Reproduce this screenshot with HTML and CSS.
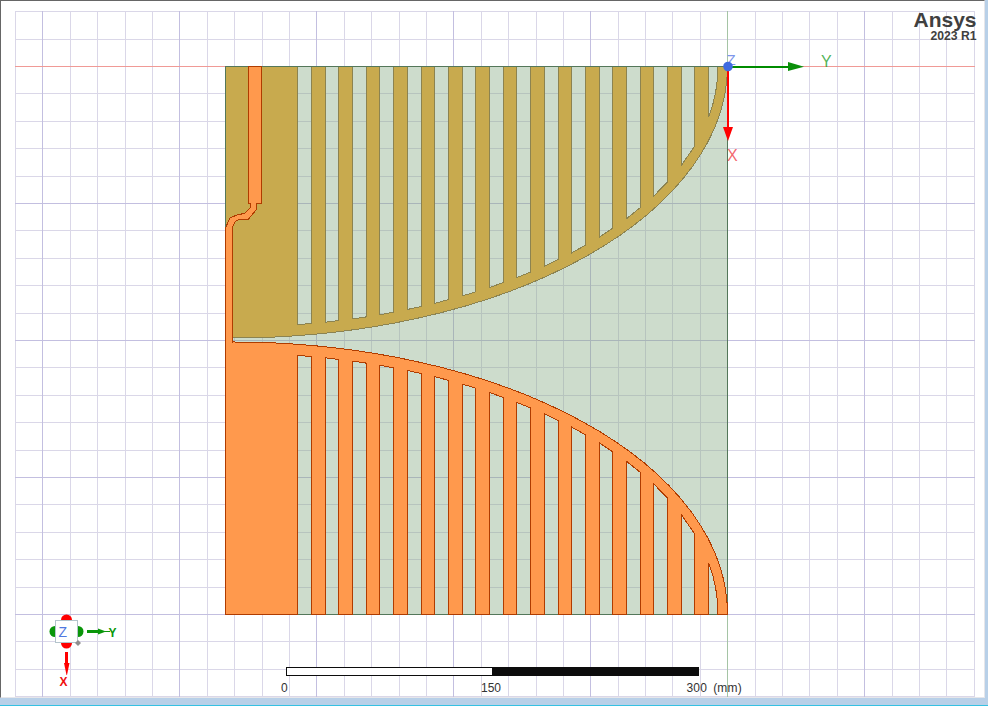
FILE: index.html
```html
<!DOCTYPE html>
<html lang="en">
<head>
<meta charset="utf-8">
<title>Ansys 2023 R1 – Modeler view</title>
<link rel="stylesheet" href="styles.css">
</head>
<body>
<div class="window">
  <main class="viewport">
    <svg class="scene" width="983" height="696" viewBox="1 1 983 696" xmlns="http://www.w3.org/2000/svg">
      <!-- grid -->
      <path class="grid-minor" d="M15.5 11V697M70.5 11V697M97.5 11V697M125.5 11V697M152.5 11V697M207.5 11V697M234.5 11V697M262.5 11V697M289.5 11V697M344.5 11V697M371.5 11V697M399.5 11V697M426.5 11V697M481.5 11V697M508.5 11V697M536.5 11V697M563.5 11V697M618.5 11V697M645.5 11V697M672.5 11V697M700.5 11V697M755.5 11V697M782.5 11V697M809.5 11V697M837.5 11V697M892.5 11V697M919.5 11V697M946.5 11V697M974.5 11V697M15 11.5H975M15 39.5H975M15 93.5H975M15 121.5H975M15 148.5H975M15 176.5H975M15 230.5H975M15 258.5H975M15 285.5H975M15 313.5H975M15 367.5H975M15 395.5H975M15 422.5H975M15 450.5H975M15 504.5H975M15 532.5H975M15 559.5H975M15 587.5H975M15 641.5H975M15 669.5H975M15 696.5H975"/>
      <path class="grid-major" d="M42.5 11V697M179.5 11V697M316.5 11V697M453.5 11V697M590.5 11V697M864.5 11V697M15 203.5H975M15 340.5H975M15 477.5H975M15 614.5H975"/>
      <path class="axis-line-red" d="M15 66.5H975"/>
      <path class="axis-line-green" d="M727.5 11V697"/>

      <!-- air box -->
      <rect class="airbox" x="225.5" y="66.5" width="502" height="548"/>

      <!-- upper conductor -->
      <path class="gold" d="M225.5 66.5H297.7V324.6L311.4 323.5V66.5H325.1V322.2L338.8 320.6V66.5H352.5V318.9L366.2 316.9V66.5H379.9V314.7L393.6 312.2V66.5H407.3V309.5L421 306.5V66.5H434.7V303.3L448.4 299.7V66.5H462.1V296L475.8 291.8V66.5H489.5V287.5L503.2 282.6V66.5H516.9V277.6L530.6 272V66.5H544.3V266.2L558 259.6V66.5H571.7V252.9L585.4 245.2V66.5H599.1V237.3L612.8 228.2V66.5H626.5V218.7L640.2 207.7V66.5H653.9V195.9L667.6 181.9V66.5H681.3V165.5L694.6 146.2V66.5H708.7V117.3A486 261 0 0 0 718 66.5H727.5A495 272 0 0 1 232 338H225.5Z"/>
      <rect class="airbox-edge" x="225.5" y="66.5" width="502" height="548"/>

      <!-- lower conductor and feed -->
      <path class="orange" d="M248.5 66.5H261.5V203.5H256.7L256 210L248.3 219.3L240 219L235 221.7L232.5 226.7V342H232A495 272 0 0 1 727.5 614.5H718A486 261 0 0 0 708.7 562.7V614.5H694.6V533.8L681.3 514.5V614.5H667.6V498.1L653.9 484.1V614.5H640.2V472.3L626.5 461.3V614.5H612.8V451.8L599.1 442.7V614.5H585.4V434.8L571.7 427.1V614.5H558V420.4L544.3 413.8V614.5H530.6V408L516.9 402.4V614.5H503.2V397.4L489.5 392.5V614.5H475.8V388.2L462.1 384V614.5H448.4V380.3L434.7 376.7V614.5H421V373.5L407.3 370.5V614.5H393.6V367.8L379.9 365.3V614.5H366.2V363.1L352.5 361.1V614.5H338.8V359.4L325.1 357.8V614.5H311.4V356.5L297.7 355.4V614.5H225.5V240L226 226.7L230 218L236.7 215L245 213.3L250 208L250.7 203.5H248.5Z"/>

      <!-- main axes -->
      <text class="label label-z" x="726.5" y="65">Z</text>
      <text class="label label-y" x="821" y="67">Y</text>
      <text class="label label-x" x="727" y="161">X</text>
      <rect class="fill-green" x="728" y="66" width="61" height="2"/>
      <path class="fill-green-head" d="M788 62L804 66.7L788 71Z"/>
      <rect class="fill-red" x="727" y="67" width="2" height="61"/>
      <path class="fill-red" d="M723 127H733L728 141Z"/>
      <circle class="origin" cx="728" cy="66.5" r="4.8"/>

      <!-- logo -->
      <text class="logo" x="976.5" y="27">Ansys</text>
      <text class="logo-sub" x="976.5" y="40">2023 R1</text>

      <!-- orientation triad -->
      <ellipse class="fill-red" cx="66.5" cy="620" rx="5.5" ry="5.5"/>
      <ellipse class="fill-red" cx="66.5" cy="643" rx="5.5" ry="5.5"/>
      <ellipse class="fill-tri-green" cx="55" cy="631.5" rx="5.5" ry="5.5"/>
      <ellipse class="fill-tri-green" cx="78" cy="631.5" rx="5.5" ry="5.5"/>
      <rect class="cube" x="55.5" y="620.5" width="22" height="22"/>
      <path class="diamond" d="M78 640L81 643L78 646L75 643Z"/>
      <text class="cube-z" x="62.7" y="637">Z</text>
      <rect class="fill-tri-green" x="87" y="630" width="12" height="3"/>
      <path class="fill-tri-green" d="M98 628.5L106 631.5L98 634.5Z"/>
      <rect class="fill-tri-green" x="105" y="631" width="5" height="1"/>
      <text class="tri tri-y" x="108.5" y="637">Y</text>
      <rect class="fill-red" x="65" y="652" width="3" height="12"/>
      <path class="fill-red" d="M64 663H69.5L67 675H66.5Z"/>
      <text class="tri tri-x" x="59.5" y="686">X</text>

      <!-- scale bar -->
      <rect class="scale-white" x="286.5" y="667.5" width="206" height="8"/>
      <rect class="scale-black" x="492" y="667" width="207" height="9"/>
      <text class="scale-text" x="281" y="692">0</text>
      <text class="scale-text" x="481" y="692">150</text>
      <text class="scale-text scale-unit" x="686.5" y="692">300 (mm)</text>
    </svg>
  </main>
  <div class="status-line"></div>
</div>
</body>
</html>
```
FILE: styles.css
```css
html, body {
  margin: 0;
  padding: 0;
  background: #b8d0e8;
}

.window {
  width: 988px;
  height: 706px;
  display: flex;
  flex-direction: column;
  overflow: hidden;
  background: #b8d0e8;
}

.viewport {
  width: 983px;
  height: 696px;
  border-top: 1px solid #666;
  border-left: 1px solid #666;
  border-right: 1px solid #e6e6ea;
  border-bottom: 1px solid #e6e6ea;
  background: #fff;
  flex: none;
}

.scene {
  display: block;
  font-family: "Liberation Sans", Arial, sans-serif;
}

.status-line {
  margin-top: auto;
  height: 1px;
  background: #35c1e2;
}

.grid-minor { fill: none; stroke: #dad7e8; stroke-width: 1; shape-rendering: crispEdges; }
.grid-major { fill: none; stroke: #c3bfe0; stroke-width: 1; shape-rendering: crispEdges; }
.axis-line-red { fill: none; stroke: #f09a96; stroke-width: 1; shape-rendering: crispEdges; }
.axis-line-green { fill: none; stroke: #a5c4a5; stroke-width: 1; shape-rendering: crispEdges; }

.airbox { fill: #82a87f; fill-opacity: 0.4; stroke: none; shape-rendering: crispEdges; }
.airbox-edge { fill: none; stroke: #54775a; stroke-width: 1; shape-rendering: crispEdges; }

.gold { fill: #c8aa4e; stroke: #8c8350; stroke-width: 1; shape-rendering: crispEdges; }
.orange { fill: #ff994d; stroke: #b03c00; stroke-width: 1; shape-rendering: crispEdges; }

.fill-green { fill: #008c00; }
.fill-green-head { fill: #0a8f0a; }
.fill-red { fill: #f00; }
.fill-tri-green { fill: #0a960a; }
.origin { fill: #3f6ae0; }

.label { font-size: 16px; font-weight: 400; fill-opacity: 0.8; }
.label-z { fill: #5a7ae6; font-size: 15px; }
.label-y { fill: #1f9f2f; }
.label-x { fill: #f0404a; }

.logo { fill: #404040; font-size: 21px; font-weight: 700; text-anchor: end; }
.logo-sub { fill: #404040; font-size: 12.2px; font-weight: 700; text-anchor: end; }

.cube { fill: #fff; stroke: #b4c4cc; stroke-width: 1; shape-rendering: crispEdges; }
.diamond { fill: #8f8f8f; }
.cube-z { fill: #5078e0; font-size: 14px; text-anchor: middle; }
.tri { font-size: 12px; font-weight: 700; }
.tri-y { fill: #0a960a; }
.tri-x { fill: #f01010; }

.scale-white { fill: #fff; stroke: #0c0c0c; stroke-width: 1; shape-rendering: crispEdges; }
.scale-black { fill: #0c0c0c; shape-rendering: crispEdges; }
.scale-text { fill: #333; font-size: 12px; }
.scale-unit { word-spacing: 2.5px; letter-spacing: 0.2px; }
```
